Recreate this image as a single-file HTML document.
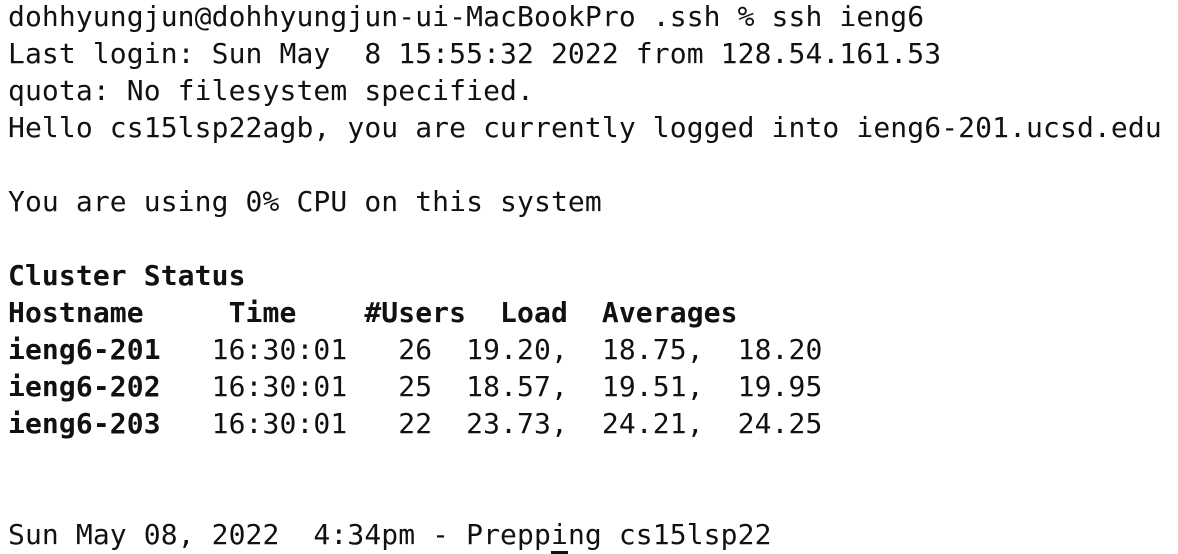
<!DOCTYPE html>
<html><head><meta charset="utf-8"><style>
html,body{margin:0;padding:0;background:#fff;width:1178px;height:554px;overflow:hidden}
pre{margin:0;position:absolute;left:8px;top:-2px;font-family:"DejaVu Sans Mono","Liberation Mono",monospace;font-size:28px;line-height:37px;color:#111;letter-spacing:0.11px}
b{font-weight:bold}
u{text-decoration:none;border-bottom:3px solid #111}
</style></head><body>
<pre>dohhyungjun@dohhyungjun-ui-MacBookPro .ssh % ssh ieng6
Last login: Sun May  8 15:55:32 2022 from 128.54.161.53
quota: No filesystem specified.
Hello cs15lsp22agb, you are currently logged into ieng6-201.ucsd.edu

You are using 0% CPU on this system

<b>Cluster Status</b>
<b>Hostname     Time    #Users  Load  Averages</b>
<b>ieng6-201</b>   16:30:01   26  19.20,  18.75,  18.20
<b>ieng6-202</b>   16:30:01   25  18.57,  19.51,  19.95
<b>ieng6-203</b>   16:30:01   22  23.73,  24.21,  24.25


Sun May 08, 2022  4:34pm - Prepp<u>i</u>ng cs15lsp22</pre>
</body></html>
